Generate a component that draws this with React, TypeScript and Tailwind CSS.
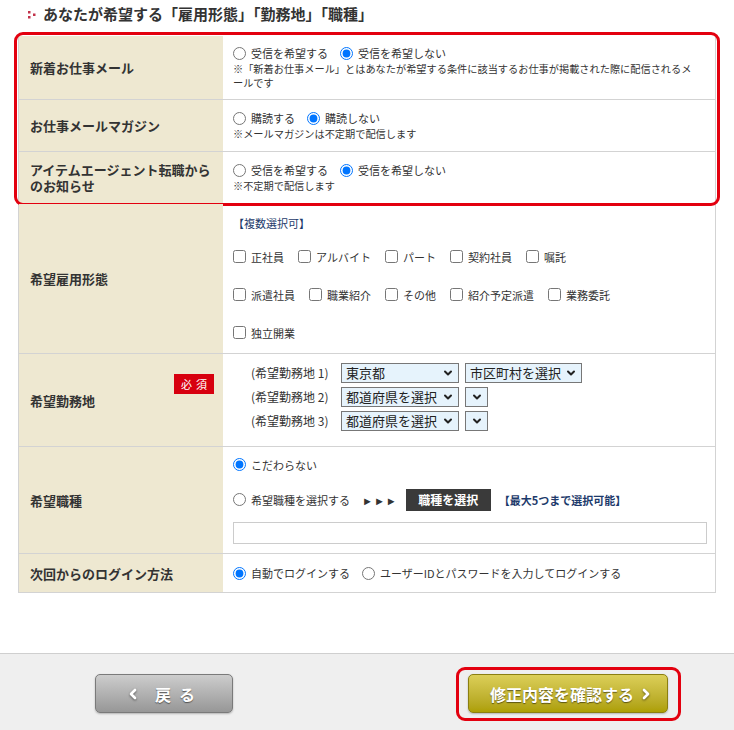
import { ChevronDown, ChevronLeft, ChevronRight } from "lucide-react";
import type { ReactNode } from "react";

function Radio({ name, label, checked }: { name: string; label: string; checked?: boolean }) {
  return (
    <label className="flex items-center gap-[5px] mr-[12px]">
      <input type="radio" name={name} defaultChecked={checked} className="m-0 w-[13px] h-[13px]" />
      <span>{label}</span>
    </label>
  );
}

function Check({ label }: { label: string }) {
  return (
    <label className="flex items-center gap-[5px] mr-[14px]">
      <input type="checkbox" className="m-0 w-[13px] h-[13px]" />
      <span>{label}</span>
    </label>
  );
}

function Row({ label, h, children, badge }: { label: ReactNode; h: string; children: ReactNode; badge?: boolean }) {
  return (
    <div className={`flex border-b border-[#d3d3d3] ${h}`}>
      <div className="relative w-[204px] shrink-0 bg-[#eee8d1] flex items-center pl-[11px] text-[13px] font-bold leading-[15px] text-[#333]">
        {label}
        {badge && (
          <span className="absolute right-[9px] top-[20px] w-[40px] h-[20px] bg-[#d7000f] text-white text-[11px] font-normal flex items-center justify-center tracking-[4px] pl-[4px]">
            必須
          </span>
        )}
      </div>
      <div className="flex-1 pl-[10px] pr-[10px] flex flex-col justify-center text-[11px] text-[#333]">{children}</div>
    </div>
  );
}

function Select({ text, w }: { text: string; w: string }) {
  return (
    <div className={`h-[20px] ${w} bg-[#e6f3fc] border border-[#777] flex items-center justify-between pl-[4px] pr-[4px] text-[13px] text-[#222]`}>
      <span>{text}</span>
      <ChevronDown size={12} strokeWidth={4} />
    </div>
  );
}

export default function App() {
  return (
    <div className="w-[734px] min-h-[730px] bg-white font-['Noto_Sans_CJK_JP',sans-serif] leading-[16px] text-[#333]">
      <div className="px-[18px]">
        <h2 className="h-[36px] flex items-start pt-[4px] pl-[10px] gap-[6px] text-[15px] font-bold leading-[20px] text-[#333]">
          <svg width="9" height="20" viewBox="0 0 9 20" className="shrink-0">
            <rect x="0" y="7" width="2.5" height="2.5" fill="#c2324a" />
            <rect x="0" y="12" width="2.5" height="2.5" fill="#c2324a" />
            <rect x="5" y="9.5" width="2.5" height="2.5" fill="#c2324a" />
          </svg>
          あなたが希望する「雇用形態」「勤務地」「職種」
        </h2>

        <div className="border-x border-[#d3d3d3]">
          <div className="relative">
            <Row label="新着お仕事メール" h="h-[64px]">
              <div className="flex items-center">
                <Radio name="new" label="受信を希望する" />
                <Radio name="new" label="受信を希望しない" checked />
              </div>
              <p className="mt-[1px] max-w-[468px] text-[10.2px] leading-[14px] [line-break:anywhere]">
                ※「新着お仕事メール」とはあなたが希望する条件に該当するお仕事が掲載された際に配信されるメールです
              </p>
            </Row>
            <Row label="お仕事メールマガジン" h="h-[52px]">
              <div className="flex items-center">
                <Radio name="mag" label="購読する" />
                <Radio name="mag" label="購読しない" checked />
              </div>
              <p className="mt-[1px] text-[10.2px] leading-[14px]">※メールマガジンは不定期で配信します</p>
            </Row>
            <Row
              label={
                <span className="block leading-[16px]">
                  アイテムエージェント転職から
                  <br />
                  のお知らせ
                </span>
              }
              h="h-[52px]"
            >
              <div className="flex items-center">
                <Radio name="info" label="受信を希望する" />
                <Radio name="info" label="受信を希望しない" checked />
              </div>
              <p className="mt-[1px] text-[10.2px] leading-[14px]">※不定期で配信します</p>
            </Row>
            <div className="absolute -left-[5px] -right-[5px] -top-[4px] -bottom-[2px] border-[3px] border-[#e3000f] rounded-[9px] pointer-events-none" />
          </div>

          <Row label="希望雇用形態" h="h-[150px]">
            <div className="flex flex-col -mt-[2px]">
              <p className="text-[11px] text-[#1d3a6b] leading-[16px]">【複数選択可】</p>
              <div className="flex items-center mt-[18px]">
                <Check label="正社員" />
                <Check label="アルバイト" />
                <Check label="パート" />
                <Check label="契約社員" />
                <Check label="嘱託" />
              </div>
              <div className="flex items-center mt-[22px]">
                <Check label="派遣社員" />
                <Check label="職業紹介" />
                <Check label="その他" />
                <Check label="紹介予定派遣" />
                <Check label="業務委託" />
              </div>
              <div className="flex items-center mt-[22px]">
                <Check label="独立開業" />
              </div>
            </div>
          </Row>

          <Row label="希望勤務地" h="h-[93px]" badge>
            <div className="flex flex-col gap-[4px] pl-[18px] -mt-[6px]">
              <div className="flex items-center gap-[6px]">
                <span className="w-[84px] text-[12px]">(希望勤務地 1)</span>
                <Select text="東京都" w="w-[118px]" />
                <Select text="市区町村を選択" w="w-[117px]" />
              </div>
              <div className="flex items-center gap-[6px]">
                <span className="w-[84px] text-[12px]">(希望勤務地 2)</span>
                <Select text="都道府県を選択" w="w-[118px]" />
                <Select text="" w="w-[23px]" />
              </div>
              <div className="flex items-center gap-[6px]">
                <span className="w-[84px] text-[12px]">(希望勤務地 3)</span>
                <Select text="都道府県を選択" w="w-[118px]" />
                <Select text="" w="w-[23px]" />
              </div>
            </div>
          </Row>

          <Row label="希望職種" h="h-[107px]">
            <div className="flex flex-col">
              <div className="flex items-center">
                <Radio name="job" label="こだわらない" checked />
              </div>
              <div className="flex items-center mt-[16px]">
                <Radio name="job" label="希望職種を選択する" />
                <span className="text-[11px] tracking-[1px] text-[#333] mr-[8px]">►►►</span>
                <button className="h-[22px] w-[85px] bg-[#3a3a3a] text-white text-[12px] font-bold mr-[8px]">職種を選択</button>
                <span className="text-[11px] font-bold text-[#1d3a6b]">【最大5つまで選択可能】</span>
              </div>
              <div className="mt-[11px] h-[22px] w-[474px] border border-[#ccc] bg-white" />
            </div>
          </Row>

          <Row label="次回からのログイン方法" h="h-[39px]">
            <div className="flex items-center">
              <Radio name="login" label="自動でログインする" checked />
              <Radio name="login" label="ユーザーIDとパスワードを入力してログインする" />
            </div>
          </Row>
        </div>
      </div>

      <div className="mt-[60px] border-t border-[#cfcfcf] bg-[#efefef] h-[77px] pt-[20px] flex items-start">
        <button className="ml-[95px] w-[138px] h-[39px] rounded-[5px] border border-[#7a7a7a] bg-gradient-to-b from-[#cdcdcd] to-[#979797] shadow-[0_1px_2px_rgba(0,0,0,0.25)] flex items-center justify-center gap-[14px] text-white text-[16px] font-bold [text-shadow:0_1px_1px_rgba(0,0,0,0.5)]">
          <ChevronLeft size={16} strokeWidth={4} className="drop-shadow-[0_1px_1px_rgba(0,0,0,0.5)]" />
          <span className="tracking-[8px]">戻る</span>
        </button>
        <div className="relative ml-[235px]">
          <button className="w-[200px] h-[39px] rounded-[5px] border border-[#8b7f10] bg-gradient-to-b from-[#dccf57] to-[#ad9f00] shadow-[0_1px_2px_rgba(0,0,0,0.25)] flex items-center justify-center gap-[4px] pl-[8px] text-white text-[16px] font-bold [text-shadow:0_1px_1px_rgba(0,0,0,0.5)]">
            修正内容を確認する
            <ChevronRight size={16} strokeWidth={4} className="drop-shadow-[0_1px_1px_rgba(0,0,0,0.5)]" />
          </button>
          <div className="absolute -left-[12px] -right-[13px] -top-[7px] -bottom-[8px] border-[3px] border-[#e3000f] rounded-[9px] pointer-events-none" />
        </div>
      </div>
    </div>
  );
}
